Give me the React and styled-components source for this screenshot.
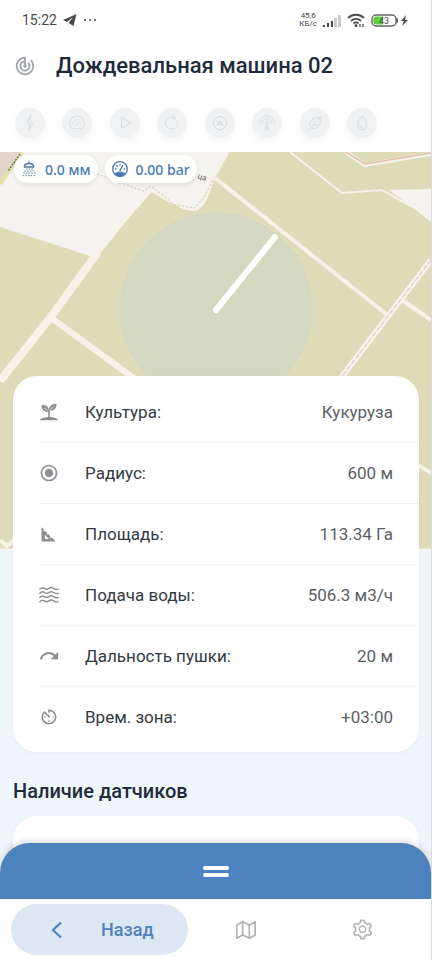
import React from 'react';
import styled, { createGlobalStyle } from 'styled-components';
import {
  MdTrackChanges,
  MdRadioButtonChecked,
  MdAvTimer,
} from 'react-icons/md';
import { FiMap } from 'react-icons/fi';
import { AiOutlineSetting } from 'react-icons/ai';

const GlobalStyle = createGlobalStyle`
  * {
    box-sizing: border-box;
  }

  body {
    margin: 0;
    font-family: Roboto, "Noto Sans", sans-serif;
    background-color: #ffffff;
    color: #1f2b3d;
  }

  button {
    font-family: inherit;
  }
`;

const Screen = styled.div`
  display: flex;
  flex-direction: column;
  height: 100vh;
  overflow: hidden;
  border-right: 1px solid #d9dcde;
`;

const StatusBar = styled.div`
  display: flex;
  align-items: center;
  justify-content: space-between;
  height: 40px;
  padding: 0 22px;
  color: #4a4a4a;
`;

const StatusGroup = styled.div`
  display: flex;
  align-items: center;
  gap: 6px;
`;

const Clock = styled.span`
  font-size: 14px;
`;

const NetSpeed = styled.span`
  display: flex;
  flex-direction: column;
  align-items: center;
  font-size: 8px;
  line-height: 8px;
`;

const Header = styled.header`
  display: flex;
  align-items: center;
  gap: 20px;
  height: 52px;
  padding: 0 14px;
  color: #a3a7ab;
`;

const Title = styled.h1`
  margin: 0;
  font-size: 22px;
  font-weight: 500;
  line-height: 30px;
  white-space: nowrap;
  color: #1f2b3d;
`;

const Actions = styled.div`
  display: flex;
  justify-content: space-between;
  height: 60px;
  padding: 16px 54px 0 15px;
`;

const ActionButton = styled.button`
  display: flex;
  align-items: center;
  justify-content: center;
  width: 30px;
  height: 30px;
  padding: 0;
  border: none;
  border-radius: 50%;
  background-color: #f0f1f2;
  color: #d9dbde;
  box-shadow: 0 4px 8px rgba(0, 0, 0, 0.04);
`;

const Content = styled.main`
  flex: 1;
  min-height: 0;
  overflow-y: auto;
  scrollbar-width: none;
  background-color: #eff6f9;
`;

const MapArea = styled.section`
  position: relative;
  height: 398px;
  background-color: #dedcb8;
  overflow: hidden;
`;

const MapDrawing = styled.svg`
  display: block;
  width: 100%;
  height: 100%;
`;

const Badges = styled.div`
  position: absolute;
  top: 3px;
  left: 14px;
  display: flex;
  gap: 7px;
`;

const Badge = styled.div`
  display: flex;
  align-items: center;
  gap: 8px;
  height: 28px;
  padding: 0 7px;
  border-radius: 14px;
  background-color: rgba(255, 255, 255, 0.94);
  box-shadow: 0 2px 5px rgba(0, 0, 0, 0.08);
  color: #4a7ab0;
  font-family: "Noto Sans", sans-serif;
  font-size: 14px;
  font-weight: 500;
  white-space: nowrap;
`;

const Card = styled.section`
  position: relative;
  margin: ${(props) => (props.$overlap ? '-174px' : '0')} 12px 0 13px;
  padding: 6px 0 5px;
  border-radius: 24px;
  background-color: #ffffff;
  box-shadow: 0 1px 4px rgba(0, 0, 0, 0.04);
`;

const Params = styled.dl`
  margin: 0 0 0 26px;
`;

const ParamRow = styled.div`
  display: flex;
  align-items: center;
  height: 61px;
  padding: 0 26px 0 0;
  border-bottom: 1px solid #f1f2f2;
  color: #8c9094;

  &:last-child {
    height: 60px;
    border-bottom: none;
  }
`;

const ParamName = styled.dt`
  flex: 1;
  margin-left: 26px;
  font-size: 17px;
  color: #333a44;
`;

const ParamValue = styled.dd`
  margin: 0;
  font-size: 17px;
  color: #5b5f65;
`;

const SectionTitle = styled.h2`
  margin: 26px 13px 12px;
  font-size: 20px;
  font-weight: 500;
  line-height: 26px;
  color: #1f2b3d;
`;

const SensorCard = styled(Card)`
  height: 120px;
`;

const Dock = styled.footer`
  position: relative;
  margin-top: -28px;
`;

const SheetHandle = styled.button`
  display: flex;
  flex-direction: column;
  align-items: center;
  justify-content: center;
  gap: 3px;
  width: 100%;
  height: 56px;
  padding: 0;
  border: none;
  border-radius: 30px 30px 0 0;
  background-color: #4e82bc;
  box-shadow: 0 -2px 6px rgba(60, 40, 40, 0.18);
`;

const HandleLine = styled.span`
  width: 26px;
  height: 4px;
  border-radius: 2px;
  background-color: #ffffff;
`;

const Nav = styled.nav`
  position: relative;
  display: flex;
  align-items: center;
  height: 61px;
  padding: 0 11px;
  background-color: #ffffff;
`;

const BackButton = styled.button`
  display: flex;
  align-items: center;
  gap: 38px;
  width: 177px;
  height: 51px;
  padding: 0 0 0 40px;
  border: none;
  border-radius: 26px;
  background-color: #dde7f3;
  color: #4e82bc;
  font-size: 18px;
  font-weight: 500;
`;

const NavButton = styled.button`
  display: flex;
  flex: 1;
  align-items: center;
  justify-content: center;
  height: 51px;
  padding: 0;
  border: none;
  background: none;
  color: #b0b2b5;
`;

const LineIcon = ({ size = 18, width = 1.5, children }) => (
  <svg
    width={size}
    height={size}
    viewBox="0 0 24 24"
    fill="none"
    stroke="currentColor"
    strokeWidth={width}
    strokeLinecap="round"
    strokeLinejoin="round"
    aria-hidden="true"
  >
    {children}
  </svg>
);

const actions = [
  {
    label: 'Питание',
    icon: <path d="M13 1 8 11l4 3-2 9 6-11-4-3z" />,
  },
  {
    label: 'Скорость',
    icon: (
      <>
        <path d="M4 20a11 11 0 1 1 16 0z" />
        <path d="m11 15 5-5M6 13h1M8 8l1 1M12 6v1M17 14h1" />
      </>
    ),
  },
  {
    label: 'Пуск',
    icon: <path d="M7 4v16l13-8z" />,
  },
  {
    label: 'Направление',
    icon: (
      <>
        <path d="M15 4a9 9 0 1 0 1 16" />
        <path d="M13 1l4 3-3 4" />
        <path d="M20 9v1M21 13v1M19 17v1" />
      </>
    ),
  },
  {
    label: 'Авто',
    icon: (
      <>
        <circle cx="12" cy="12" r="10" />
        <path d="m8 16 4-8 4 8M9 14h6M8 9l8 6" />
      </>
    ),
  },
  {
    label: 'Связь',
    icon: (
      <>
        <path d="M1 12a11 11 0 0 1 22 0M5 12a7 7 0 0 1 14 0" />
        <path d="M12 12v10M9 23l3-11 3 11" />
        <circle cx="12" cy="11" r="2" />
      </>
    ),
  },
  {
    label: 'Удобрение',
    icon: (
      <>
        <path d="M5 17C2 9 8 4 20 4c1 11-4 18-12 16" />
        <path d="M3 23 22 2M10 15V9M10 15h7" />
      </>
    ),
  },
  {
    label: 'Вода',
    icon: (
      <>
        <path d="M12 2c4 5 7 9 7 13a7 7 0 0 1-14 0c0-4 3-8 7-13z" />
        <path d="M8 15a4 4 0 0 0 4 4" />
      </>
    ),
  },
];

const params = [
  {
    name: 'Культура:',
    value: 'Кукуруза',
    icon: (
      <svg width="20" height="20" viewBox="0 0 24 24" fill="currentColor" aria-hidden="true">
        <path d="M3 4c5-1 8 1 8.500 5C13 4 16 2 21 2c.5 5-2 8.500-8 8.500V18h-2v-6C6 12 3 9 3 4z" />
        <path d="M6 7l5 4M18 5l-5 5" stroke="#ffffff" strokeWidth="0.8" />
        <path d="M1 22c1-3 6-4 11-4s10 1 11 4z" />
      </svg>
    ),
  },
  { name: 'Радиус:', value: '600 м', icon: <MdRadioButtonChecked size={20} /> },
  {
    name: 'Площадь:',
    value: '113.34 Га',
    icon: (
      <svg width="20" height="20" viewBox="0 0 24 24" fill="currentColor" aria-hidden="true">
        <path
          fillRule="evenodd"
          d="M3 4l3 3-1 1 1 1 1-1 3 3-1 1 1 1 1-1 3 3-1 1 1 1 1-1 5 5H3zM7 13v5h5z"
        />
      </svg>
    ),
  },
  {
    name: 'Подача воды:',
    value: '506.3 м3/ч',
    icon: (
      <LineIcon size={20} width={1.7}>
        {[4, 9, 14, 19].map((y) => (
          <path key={y} d={`M1 ${y + 1}q2.750 -3 5.500 -1t5.500 0t5.500 0t5.500 1`} />
        ))}
      </LineIcon>
    ),
  },
  {
    name: 'Дальность пушки:',
    value: '20 м',
    icon: (
      <svg width="20" height="20" viewBox="0 0 24 24" aria-hidden="true">
        <path d="M2 16C5 8 14 6 19 12" fill="none" stroke="currentColor" strokeWidth="2.400" />
        <path d="M23 7v9h-9z" fill="currentColor" />
      </svg>
    ),
  },
  { name: 'Врем. зона:', value: '+03:00', icon: <MdAvTimer size={20} /> },
];

function FieldMap() {
  return (
    <MapDrawing viewBox="0 152 431 398" preserveAspectRatio="xMidYMid slice" aria-hidden="true">
      <rect y="152" width="431" height="398" fill="#dedcb8" />
      <path d="M0 152H228L213 180 199 207Q191 213 181 208L151 190 96 259 90 256 0 227z" fill="#f4f3ef" />
      <path d="M0 152H20L0 181z" fill="#e2d3cc" />
      <path d="M22 152 0 184" stroke="#e4e1a5" strokeWidth="4" />
      <path d="M20 154 8 171" stroke="#77736c" strokeWidth="1.500" strokeDasharray="2 1" />
      <path d="M389 190 431 189V222L412 207z" fill="#f5f3ee" />
      <g fill="none" stroke="#f6f3ea">
        <path d="M98 252 50 318 0 381" strokeWidth="8" />
        <path d="M50 317 150 390" strokeWidth="6" />
        <path d="M94 254 151 190" strokeWidth="4" />
        <path d="M228 152 212 180Q205 207 195 209T151 190V178" strokeWidth="3" />
        <path d="M215 178 386 314" strokeWidth="4" />
        <path d="M290 152 342 193 382 190 412 207" strokeWidth="2" />
        <path d="M346 152 365 165 431 154" strokeWidth="4" />
        <path d="M402 300 431 320" strokeWidth="4" />
        <path d="M431 260 340 379" strokeWidth="6" />
        <path d="M418 465 431 473" strokeWidth="4" />
        <path d="M0 540 7 546 14 540" strokeWidth="4" />
      </g>
      <path d="M0 549.500H431" stroke="#f6f3ea" strokeWidth="2" />
      <path d="M346 152 365 164 431 153" fill="none" stroke="#e4bfa6" strokeWidth="1.500" />
      <g fill="none" stroke="#cac7ae">
        <path d="M97 174 143 191 151 186 175 205 195 208 205 196 213 179" strokeDasharray="2 2" />
        <path d="M431 260 340 379" strokeDasharray="5 2" />
      </g>
      <text x="197" y="178" fontSize="8" fill="#68635b" transform="rotate(20 197 178)">
        ца
      </text>
      <circle cx="216" cy="309" r="96" fill="#d4d8c1" stroke="#cfd3bf" strokeWidth="0.6" />
      <path d="M216 310 275 237" stroke="#ffffff" strokeWidth="6" strokeLinecap="round" />
    </MapDrawing>
  );
}

function SystemBar() {
  return (
    <StatusBar>
      <StatusGroup>
        <Clock>15:22</Clock>
        <svg width="14" height="12" viewBox="0 0 14 12" aria-hidden="true">
          <path d="M13.500 0 0 6l4 2 6-5-4.500 6 5 3z" fill="#4a4a4a" />
        </svg>
        <svg width="14" height="4" viewBox="0 0 14 4" fill="#4a4a4a" aria-hidden="true">
          <circle cx="2" cy="2" r="1" />
          <circle cx="7" cy="2" r="1" />
          <circle cx="12" cy="2" r="1" />
        </svg>
      </StatusGroup>
      <StatusGroup>
        <NetSpeed>
          <span>45,6</span>
          <span>КБ/с</span>
        </NetSpeed>
        <svg width="18" height="13" viewBox="0 0 18 13" aria-hidden="true">
          <path d="M0 11h2v2H0zM4 9h2v4H4zM8 7h2v6H8z" fill="#4a4a4a" />
          <path d="M11 4h3v9h-3zM15 1h3v12h-3z" fill="#c9c9c9" />
        </svg>
        <svg width="18" height="14" viewBox="0 0 18 14" fill="none" stroke="#4a4a4a" strokeWidth="1.800" aria-hidden="true">
          <path d="M1 5a11.500 11.500 0 0 1 16 0M4 8a7 7 0 0 1 10 0M6.500 10.500a3.500 3.500 0 0 1 5 0" />
          <circle cx="9" cy="12.500" r="0.6" fill="#4a4a4a" />
          <path d="M13 11v3M16 11v3" strokeWidth="1.400" />
        </svg>
        <svg width="38" height="13" viewBox="0 0 38 13" aria-hidden="true">
          <rect x="1" y="1" width="24" height="11" rx="4" fill="#ffffff" stroke="#666666" strokeWidth="1.400" />
          <path d="M5 2.500h7v8H5a2.500 2.500 0 0 1-2.500-2.500V5A2.500 2.500 0 0 1 5 2.500z" fill="#5fce3d" />
          <path d="M26 4.500v4" stroke="#666666" strokeWidth="2" />
          <text x="8" y="9.500" fontSize="9" fill="#4a4a4a">
            43
          </text>
          <path d="M35 1 30 7h3l-2 5 6-6h-3z" fill="#4a4a4a" />
        </svg>
      </StatusGroup>
    </StatusBar>
  );
}

function App() {
  return (
    <>
      <GlobalStyle />
      <Screen>
        <SystemBar />
        <Header>
          <MdTrackChanges size={22} />
          <Title>Дождевальная машина 02</Title>
        </Header>
        <Actions>
          {actions.map((action) => (
            <ActionButton key={action.label} type="button" aria-label={action.label}>
              <LineIcon size={16}>{action.icon}</LineIcon>
            </ActionButton>
          ))}
        </Actions>

        <Content>
          <MapArea>
            <FieldMap />
            <Badges>
              <Badge>
                <LineIcon size={16}>
                  <path d="M12 1v3M5 9c0-7 14-7 14 0z" strokeWidth="2" />
                  <path d="M8 12h1M12 12h1M16 12h1M6 15h1M10 15h1M14 15h1M18 15h1M4 18h1M8 18h1M12 18h1M16 18h1M20 18h1M3 22h1M7 22h1M11 22h1M15 22h1M20 22h1" />
                </LineIcon>
                0.0 мм
              </Badge>
              <Badge>
                <LineIcon size={16} width={2}>
                  <circle cx="12" cy="12" r="11" />
                  <path d="M5 12h1M7 7l1 1M12 5v1M18 12h1M12 14l4-7" />
                  <path d="M5 19c4-3 10-3 14 0-4 5-10 5-14 0z" fill="currentColor" />
                </LineIcon>
                0.00 bar
              </Badge>
            </Badges>
          </MapArea>

          <Card $overlap>
            <Params>
              {params.map((param) => (
                <ParamRow key={param.name}>
                  {param.icon}
                  <ParamName>{param.name}</ParamName>
                  <ParamValue>{param.value}</ParamValue>
                </ParamRow>
              ))}
            </Params>
          </Card>

          <SectionTitle>Наличие датчиков</SectionTitle>
          <SensorCard />
        </Content>

        <Dock>
          <SheetHandle type="button" aria-label="Открыть панель">
            <HandleLine />
            <HandleLine />
          </SheetHandle>
          <Nav>
            <BackButton type="button">
              <svg width="12" height="18" viewBox="0 0 12 18" fill="none" stroke="currentColor" strokeWidth="2.200" aria-hidden="true">
                <path d="M10 1.500 2 9l8 7.500" />
              </svg>
              Назад
            </BackButton>
            <NavButton type="button" aria-label="Карта">
              <FiMap size={20} />
            </NavButton>
            <NavButton type="button" aria-label="Настройки">
              <AiOutlineSetting size={23} />
            </NavButton>
          </Nav>
        </Dock>
      </Screen>
    </>
  );
}

export default App;
